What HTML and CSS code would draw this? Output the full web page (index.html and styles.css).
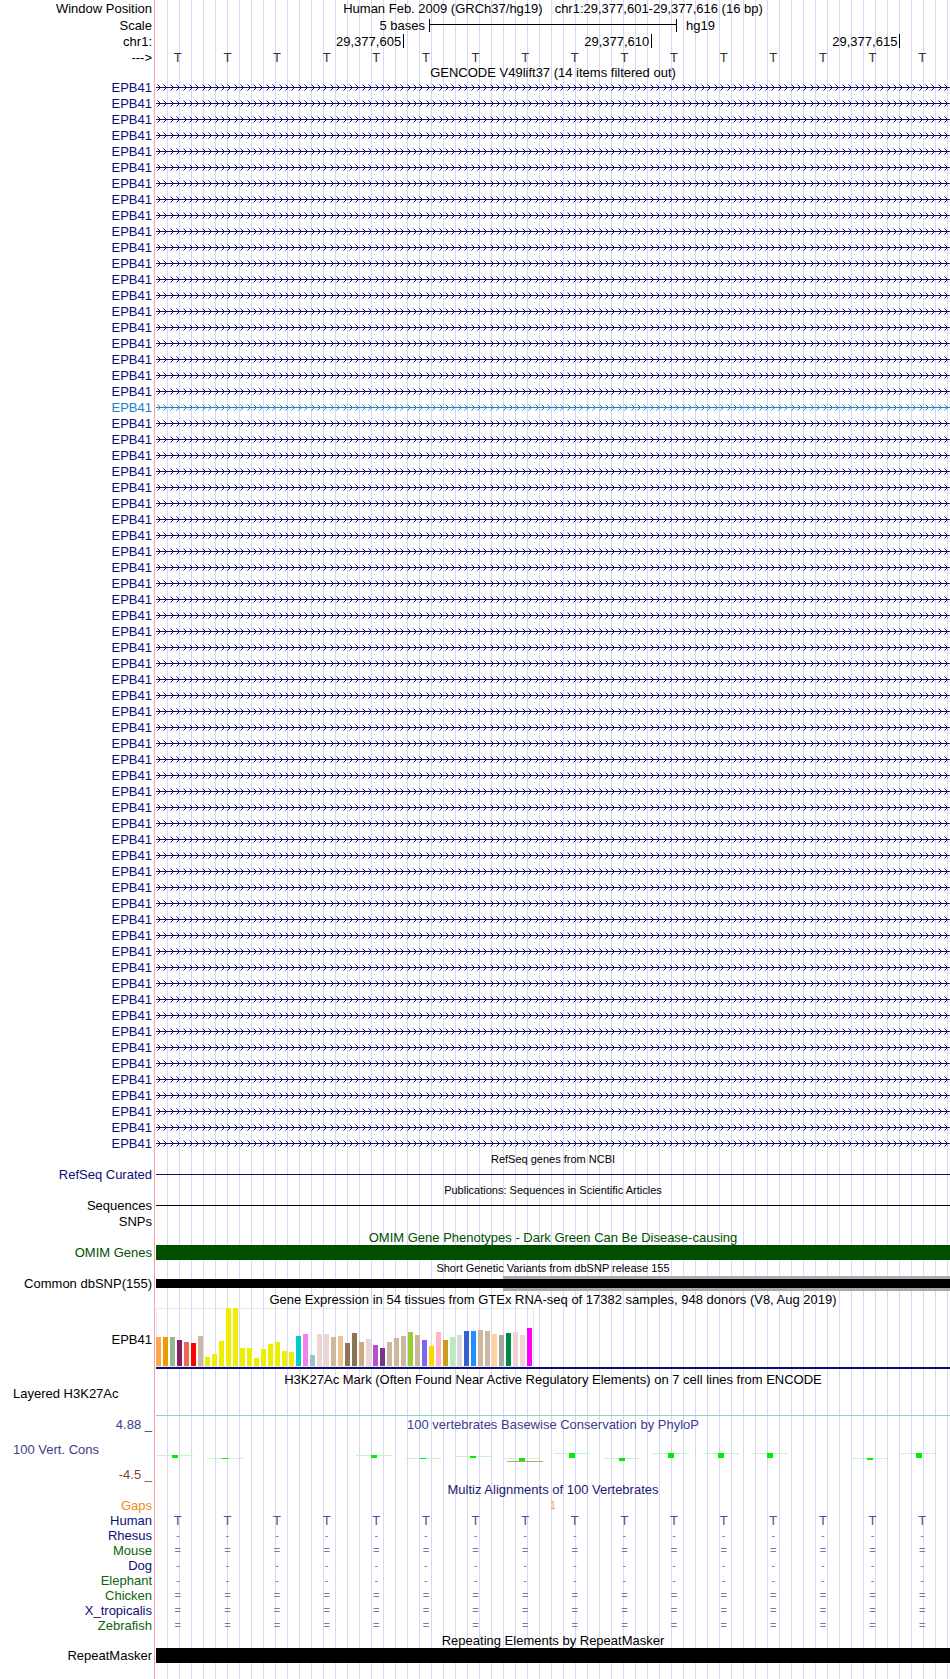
FILE: index.html
```html
<!DOCTYPE html>
<html lang="en">

<head>
    <meta charset="UTF-8">
    <meta name="viewport" content="width=device-width, initial-scale=1.0">
    <title>UCSC Genome Browser chr1:29,377,601-29,377,616</title>
    <link rel="stylesheet" href="styles.css">
</head>

<body>
    <div class="browser">
        <!-- ruler -->
        <div class="row r17">
            <div class="lbl">Window Position</div>
            <div class="dat mid">Human Feb. 2009 (GRCh37/hg19)<span class="pos">chr1:29,377,601-29,377,616 (16 bp)</span></div>
        </div>
        <div class="row r17">
            <div class="lbl">Scale</div>
            <div class="dat scale">
                <span class="scale-txt">5 bases</span>
                <span class="scale-bar"></span>
                <span class="scale-db">hg19</span>
            </div>
        </div>
        <div class="row">
            <div class="lbl">chr1:</div>
            <div class="dat bases">
                <span class="tick t1">29,377,605</span>
                <span class="tick t2">29,377,610</span>
                <span class="tick t3">29,377,615</span>
            </div>
        </div>
        <div class="row r15">
            <div class="lbl">---&gt;</div>
            <div class="dat bases seq"><span>T</span><span>T</span><span>T</span><span>T</span><span>T</span><span>T</span><span>T</span><span>T</span><span>T</span><span>T</span><span>T</span><span>T</span><span>T</span><span>T</span><span>T</span><span>T</span></div>
        </div>

        <!-- GENCODE: 67 transcripts -->
        <div class="row r15">
            <div class="lbl"></div>
            <div class="dat mid">GENCODE V49lift37 (14 items filtered out)</div>
        </div>
        <div class="row gene"><div class="lbl">EPB41</div><svg class="dat" width="794" height="16">
            <defs>
                <pattern id="barb" width="32" height="16" patternUnits="userSpaceOnUse">
                    <rect y="7" width="32" height="1" fill="#0c0c78"/>
                    <path d="M1.5 4.5l3 3-3 3M7.5 4.5l3 3-3 3M14.5 4.5l3 3-3 3M20.5 4.5l3 3-3 3M27.5 4.5l3 3-3 3" fill="none" stroke="#0c0c78"/>
                </pattern>
                <pattern id="barb-hl" width="32" height="16" patternUnits="userSpaceOnUse">
                    <rect y="7" width="32" height="1" fill="#1f80c4"/>
                    <path d="M1.5 4.5l3 3-3 3M7.5 4.5l3 3-3 3M14.5 4.5l3 3-3 3M20.5 4.5l3 3-3 3M27.5 4.5l3 3-3 3" fill="none" stroke="#1f80c4"/>
                </pattern>
            </defs>
            <rect class="barbs" width="794" height="16"/></svg></div>
        <div class="row gene"><div class="lbl">EPB41</div><svg class="dat" width="794" height="16"><rect class="barbs" width="794" height="16"/></svg></div>
        <div class="row gene"><div class="lbl">EPB41</div><svg class="dat" width="794" height="16"><rect class="barbs" width="794" height="16"/></svg></div>
        <div class="row gene"><div class="lbl">EPB41</div><svg class="dat" width="794" height="16"><rect class="barbs" width="794" height="16"/></svg></div>
        <div class="row gene"><div class="lbl">EPB41</div><svg class="dat" width="794" height="16"><rect class="barbs" width="794" height="16"/></svg></div>

        <div class="row gene"><div class="lbl">EPB41</div><svg class="dat" width="794" height="16"><rect class="barbs" width="794" height="16"/></svg></div>
        <div class="row gene"><div class="lbl">EPB41</div><svg class="dat" width="794" height="16"><rect class="barbs" width="794" height="16"/></svg></div>
        <div class="row gene"><div class="lbl">EPB41</div><svg class="dat" width="794" height="16"><rect class="barbs" width="794" height="16"/></svg></div>
        <div class="row gene"><div class="lbl">EPB41</div><svg class="dat" width="794" height="16"><rect class="barbs" width="794" height="16"/></svg></div>
        <div class="row gene"><div class="lbl">EPB41</div><svg class="dat" width="794" height="16"><rect class="barbs" width="794" height="16"/></svg></div>

        <div class="row gene"><div class="lbl">EPB41</div><svg class="dat" width="794" height="16"><rect class="barbs" width="794" height="16"/></svg></div>
        <div class="row gene"><div class="lbl">EPB41</div><svg class="dat" width="794" height="16"><rect class="barbs" width="794" height="16"/></svg></div>
        <div class="row gene"><div class="lbl">EPB41</div><svg class="dat" width="794" height="16"><rect class="barbs" width="794" height="16"/></svg></div>
        <div class="row gene"><div class="lbl">EPB41</div><svg class="dat" width="794" height="16"><rect class="barbs" width="794" height="16"/></svg></div>
        <div class="row gene"><div class="lbl">EPB41</div><svg class="dat" width="794" height="16"><rect class="barbs" width="794" height="16"/></svg></div>

        <div class="row gene"><div class="lbl">EPB41</div><svg class="dat" width="794" height="16"><rect class="barbs" width="794" height="16"/></svg></div>
        <div class="row gene"><div class="lbl">EPB41</div><svg class="dat" width="794" height="16"><rect class="barbs" width="794" height="16"/></svg></div>
        <div class="row gene"><div class="lbl">EPB41</div><svg class="dat" width="794" height="16"><rect class="barbs" width="794" height="16"/></svg></div>
        <div class="row gene"><div class="lbl">EPB41</div><svg class="dat" width="794" height="16"><rect class="barbs" width="794" height="16"/></svg></div>
        <div class="row gene"><div class="lbl">EPB41</div><svg class="dat" width="794" height="16"><rect class="barbs" width="794" height="16"/></svg></div>

        <div class="row gene hl"><div class="lbl">EPB41</div><svg class="dat" width="794" height="16"><rect class="barbs" width="794" height="16"/></svg></div>

        <div class="row gene"><div class="lbl">EPB41</div><svg class="dat" width="794" height="16"><rect class="barbs" width="794" height="16"/></svg></div>
        <div class="row gene"><div class="lbl">EPB41</div><svg class="dat" width="794" height="16"><rect class="barbs" width="794" height="16"/></svg></div>
        <div class="row gene"><div class="lbl">EPB41</div><svg class="dat" width="794" height="16"><rect class="barbs" width="794" height="16"/></svg></div>
        <div class="row gene"><div class="lbl">EPB41</div><svg class="dat" width="794" height="16"><rect class="barbs" width="794" height="16"/></svg></div>
        <div class="row gene"><div class="lbl">EPB41</div><svg class="dat" width="794" height="16"><rect class="barbs" width="794" height="16"/></svg></div>

        <div class="row gene"><div class="lbl">EPB41</div><svg class="dat" width="794" height="16"><rect class="barbs" width="794" height="16"/></svg></div>
        <div class="row gene"><div class="lbl">EPB41</div><svg class="dat" width="794" height="16"><rect class="barbs" width="794" height="16"/></svg></div>
        <div class="row gene"><div class="lbl">EPB41</div><svg class="dat" width="794" height="16"><rect class="barbs" width="794" height="16"/></svg></div>
        <div class="row gene"><div class="lbl">EPB41</div><svg class="dat" width="794" height="16"><rect class="barbs" width="794" height="16"/></svg></div>
        <div class="row gene"><div class="lbl">EPB41</div><svg class="dat" width="794" height="16"><rect class="barbs" width="794" height="16"/></svg></div>

        <div class="row gene"><div class="lbl">EPB41</div><svg class="dat" width="794" height="16"><rect class="barbs" width="794" height="16"/></svg></div>
        <div class="row gene"><div class="lbl">EPB41</div><svg class="dat" width="794" height="16"><rect class="barbs" width="794" height="16"/></svg></div>
        <div class="row gene"><div class="lbl">EPB41</div><svg class="dat" width="794" height="16"><rect class="barbs" width="794" height="16"/></svg></div>
        <div class="row gene"><div class="lbl">EPB41</div><svg class="dat" width="794" height="16"><rect class="barbs" width="794" height="16"/></svg></div>
        <div class="row gene"><div class="lbl">EPB41</div><svg class="dat" width="794" height="16"><rect class="barbs" width="794" height="16"/></svg></div>

        <div class="row gene"><div class="lbl">EPB41</div><svg class="dat" width="794" height="16"><rect class="barbs" width="794" height="16"/></svg></div>
        <div class="row gene"><div class="lbl">EPB41</div><svg class="dat" width="794" height="16"><rect class="barbs" width="794" height="16"/></svg></div>
        <div class="row gene"><div class="lbl">EPB41</div><svg class="dat" width="794" height="16"><rect class="barbs" width="794" height="16"/></svg></div>
        <div class="row gene"><div class="lbl">EPB41</div><svg class="dat" width="794" height="16"><rect class="barbs" width="794" height="16"/></svg></div>
        <div class="row gene"><div class="lbl">EPB41</div><svg class="dat" width="794" height="16"><rect class="barbs" width="794" height="16"/></svg></div>

        <div class="row gene"><div class="lbl">EPB41</div><svg class="dat" width="794" height="16"><rect class="barbs" width="794" height="16"/></svg></div>
        <div class="row gene"><div class="lbl">EPB41</div><svg class="dat" width="794" height="16"><rect class="barbs" width="794" height="16"/></svg></div>
        <div class="row gene"><div class="lbl">EPB41</div><svg class="dat" width="794" height="16"><rect class="barbs" width="794" height="16"/></svg></div>
        <div class="row gene"><div class="lbl">EPB41</div><svg class="dat" width="794" height="16"><rect class="barbs" width="794" height="16"/></svg></div>
        <div class="row gene"><div class="lbl">EPB41</div><svg class="dat" width="794" height="16"><rect class="barbs" width="794" height="16"/></svg></div>

        <div class="row gene"><div class="lbl">EPB41</div><svg class="dat" width="794" height="16"><rect class="barbs" width="794" height="16"/></svg></div>
        <div class="row gene"><div class="lbl">EPB41</div><svg class="dat" width="794" height="16"><rect class="barbs" width="794" height="16"/></svg></div>
        <div class="row gene"><div class="lbl">EPB41</div><svg class="dat" width="794" height="16"><rect class="barbs" width="794" height="16"/></svg></div>
        <div class="row gene"><div class="lbl">EPB41</div><svg class="dat" width="794" height="16"><rect class="barbs" width="794" height="16"/></svg></div>
        <div class="row gene"><div class="lbl">EPB41</div><svg class="dat" width="794" height="16"><rect class="barbs" width="794" height="16"/></svg></div>

        <div class="row gene"><div class="lbl">EPB41</div><svg class="dat" width="794" height="16"><rect class="barbs" width="794" height="16"/></svg></div>
        <div class="row gene"><div class="lbl">EPB41</div><svg class="dat" width="794" height="16"><rect class="barbs" width="794" height="16"/></svg></div>
        <div class="row gene"><div class="lbl">EPB41</div><svg class="dat" width="794" height="16"><rect class="barbs" width="794" height="16"/></svg></div>
        <div class="row gene"><div class="lbl">EPB41</div><svg class="dat" width="794" height="16"><rect class="barbs" width="794" height="16"/></svg></div>
        <div class="row gene"><div class="lbl">EPB41</div><svg class="dat" width="794" height="16"><rect class="barbs" width="794" height="16"/></svg></div>

        <div class="row gene"><div class="lbl">EPB41</div><svg class="dat" width="794" height="16"><rect class="barbs" width="794" height="16"/></svg></div>
        <div class="row gene"><div class="lbl">EPB41</div><svg class="dat" width="794" height="16"><rect class="barbs" width="794" height="16"/></svg></div>
        <div class="row gene"><div class="lbl">EPB41</div><svg class="dat" width="794" height="16"><rect class="barbs" width="794" height="16"/></svg></div>
        <div class="row gene"><div class="lbl">EPB41</div><svg class="dat" width="794" height="16"><rect class="barbs" width="794" height="16"/></svg></div>
        <div class="row gene"><div class="lbl">EPB41</div><svg class="dat" width="794" height="16"><rect class="barbs" width="794" height="16"/></svg></div>

        <div class="row gene"><div class="lbl">EPB41</div><svg class="dat" width="794" height="16"><rect class="barbs" width="794" height="16"/></svg></div>
        <div class="row gene"><div class="lbl">EPB41</div><svg class="dat" width="794" height="16"><rect class="barbs" width="794" height="16"/></svg></div>
        <div class="row gene"><div class="lbl">EPB41</div><svg class="dat" width="794" height="16"><rect class="barbs" width="794" height="16"/></svg></div>
        <div class="row gene"><div class="lbl">EPB41</div><svg class="dat" width="794" height="16"><rect class="barbs" width="794" height="16"/></svg></div>
        <div class="row gene"><div class="lbl">EPB41</div><svg class="dat" width="794" height="16"><rect class="barbs" width="794" height="16"/></svg></div>

        <div class="row gene"><div class="lbl">EPB41</div><svg class="dat" width="794" height="16"><rect class="barbs" width="794" height="16"/></svg></div>

        <!-- RefSeq / publications / SNPs -->
        <div class="row r15">
            <div class="lbl"></div>
            <div class="dat mid small">RefSeq genes from NCBI</div>
        </div>
        <div class="row r15 navy">
            <div class="lbl">RefSeq Curated</div>
            <div class="dat line"></div>
        </div>
        <div class="row">
            <div class="lbl"></div>
            <div class="dat mid small">Publications: Sequences in Scientific Articles</div>
        </div>
        <div class="row r15">
            <div class="lbl">Sequences</div>
            <div class="dat line"></div>
        </div>
        <div class="row r17">
            <div class="lbl">SNPs</div>
            <div class="dat"></div>
        </div>
        <div class="row r15 green">
            <div class="lbl"></div>
            <div class="dat mid">OMIM Gene Phenotypes - Dark Green Can Be Disease-causing</div>
        </div>
        <div class="row r15 green">
            <div class="lbl">OMIM Genes</div>
            <div class="dat omim"></div>
        </div>
        <div class="row">
            <div class="lbl"></div>
            <div class="dat mid small">Short Genetic Variants from dbSNP release 155</div>
        </div>
        <div class="row r15">
            <div class="lbl">Common dbSNP(155)</div>
            <div class="dat snp"><div class="snp-bar"></div></div>
        </div>

        <!-- GTEx -->
        <div class="row r17">
            <div class="lbl"></div>
            <div class="dat mid">Gene Expression in 54 tissues from GTEx RNA-seq of 17382 samples, 948 donors (V8, Aug 2019)</div>
        </div>
        <div class="row gtex">
            <div class="lbl">EPB41</div>
            <div class="dat gtex-plot">
                <svg width="794" height="59">
                    <rect class="gtex-box" x="0.5" y="0.5" width="377" height="58"/>
                    <rect x="0" y="29" width="5" height="29" fill="#ffa54f"/>
                    <rect x="7" y="29" width="5" height="29" fill="#ee9a00"/>
                    <rect x="14" y="29" width="5" height="29" fill="#8fbc8f"/>
                    <rect x="21" y="32" width="5" height="26" fill="#8b1c62"/>
                    <rect x="28" y="34" width="5" height="24" fill="#ee6a50"/>
                    <rect x="35" y="35" width="5" height="23" fill="#ff0000"/>
                    <rect x="42" y="28" width="5" height="30" fill="#cdb79e"/>
                    <rect x="49" y="49" width="5" height="9" fill="#eeee00"/>
                    <rect x="56" y="46" width="5" height="12" fill="#eeee00"/>
                    <rect x="63" y="33" width="5" height="25" fill="#eeee00"/>
                    <rect x="70" y="0" width="5" height="58" fill="#eeee00"/>
                    <rect x="77" y="0" width="5" height="58" fill="#eeee00"/>
                    <rect x="84" y="40" width="5" height="18" fill="#eeee00"/>
                    <rect x="91" y="40" width="5" height="18" fill="#eeee00"/>
                    <rect x="98" y="50" width="5" height="8" fill="#eeee00"/>
                    <rect x="105" y="41" width="5" height="17" fill="#eeee00"/>
                    <rect x="112" y="36" width="5" height="22" fill="#eeee00"/>
                    <rect x="119" y="34" width="5" height="24" fill="#eeee00"/>
                    <rect x="126" y="43" width="5" height="15" fill="#eeee00"/>
                    <rect x="133" y="44" width="5" height="14" fill="#eeee00"/>
                    <rect x="140" y="28" width="5" height="30" fill="#00cdcd"/>
                    <rect x="147" y="26" width="5" height="32" fill="#ee82ee"/>
                    <rect x="154" y="47" width="5" height="11" fill="#9ac0cd"/>
                    <rect x="161" y="26" width="5" height="32" fill="#eed5d2"/>
                    <rect x="168" y="26" width="5" height="32" fill="#eed5d2"/>
                    <rect x="175" y="29" width="5" height="29" fill="#cdb79e"/>
                    <rect x="182" y="28" width="5" height="30" fill="#eec591"/>
                    <rect x="189" y="35" width="5" height="23" fill="#8b7355"/>
                    <rect x="196" y="25" width="5" height="33" fill="#8b7355"/>
                    <rect x="203" y="34" width="5" height="24" fill="#cdaa7d"/>
                    <rect x="210" y="31" width="5" height="27" fill="#eed5d2"/>
                    <rect x="217" y="37" width="5" height="21" fill="#b452cd"/>
                    <rect x="224" y="40" width="5" height="18" fill="#7a378b"/>
                    <rect x="231" y="34" width="5" height="24" fill="#cdb79e"/>
                    <rect x="238" y="30" width="5" height="28" fill="#cdb79e"/>
                    <rect x="245" y="28" width="5" height="30" fill="#cdb79e"/>
                    <rect x="252" y="24" width="5" height="34" fill="#9acd32"/>
                    <rect x="259" y="27" width="5" height="31" fill="#cdb79e"/>
                    <rect x="266" y="32" width="5" height="26" fill="#7b68ee"/>
                    <rect x="273" y="38" width="5" height="20" fill="#ffd700"/>
                    <rect x="280" y="24" width="5" height="34" fill="#ffb6c1"/>
                    <rect x="287" y="32" width="5" height="26" fill="#cd9b1d"/>
                    <rect x="294" y="29" width="5" height="29" fill="#b4eeb4"/>
                    <rect x="301" y="27" width="5" height="31" fill="#d9d9d9"/>
                    <rect x="308" y="23" width="5" height="35" fill="#3a5fcd"/>
                    <rect x="315" y="23" width="5" height="35" fill="#1e90ff"/>
                    <rect x="322" y="22" width="5" height="36" fill="#cdb79e"/>
                    <rect x="329" y="23" width="5" height="35" fill="#cdb79e"/>
                    <rect x="336" y="26" width="5" height="32" fill="#ffd39b"/>
                    <rect x="343" y="27" width="5" height="31" fill="#a6a6a6"/>
                    <rect x="350" y="25" width="5" height="33" fill="#008b45"/>
                    <rect x="357" y="24" width="5" height="34" fill="#eed5d2"/>
                    <rect x="364" y="27" width="5" height="31" fill="#eed5d2"/>
                    <rect x="371" y="20" width="5" height="38" fill="#ff00ff"/>
                </svg>
            </div>
        </div>

        <!-- H3K27Ac -->
        <div class="row r17 pad-title">
            <div class="lbl"></div>
            <div class="dat mid">H3K27Ac Mark (Often Found Near Active Regulatory Elements) on 7 cell lines from ENCODE</div>
        </div>
        <div class="row layer">
            <div class="lbl">Layered H3K27Ac</div>
            <div class="dat"></div>
        </div>

        <!-- PhyloP -->
        <div class="row r17 phylo">
            <div class="lbl">4.88 _</div>
            <div class="dat mid">100 vertebrates Basewise Conservation by PhyloP</div>
        </div>
        <div class="row phylo-data">
            <div class="lbl phylo-lbl">
                <span>100 Vert. Cons</span>
                <span class="axis-lo">-4.5 _</span>
            </div>
            <svg class="dat" width="794" height="49">
                <g class="pale">
                    <rect x="1" y="22" width="36" height="1"/>
                    <rect x="51" y="25" width="36" height="1"/>
                    <rect x="200" y="22" width="36" height="1"/>
                    <rect x="249" y="25" width="36" height="1"/>
                    <rect x="299" y="23" width="36" height="1"/>
                    <rect x="348" y="25" width="36" height="1"/>
                    <rect x="398" y="20" width="36" height="1"/>
                    <rect x="448" y="25" width="36" height="1"/>
                    <rect x="497" y="20" width="36" height="1"/>
                    <rect x="547" y="20" width="36" height="1"/>
                    <rect x="596" y="20" width="36" height="1"/>
                    <rect x="696" y="25" width="36" height="1"/>
                    <rect x="745" y="20" width="36" height="1"/>
                </g>
                <rect class="neg" x="351" y="28" width="36" height="1"/>
                <g class="hit">
                    <rect x="16" y="22" width="6" height="3"/>
                    <rect x="66" y="25" width="6" height="1"/>
                    <rect x="215" y="22" width="6" height="3"/>
                    <rect x="264" y="25" width="6" height="1"/>
                    <rect x="314" y="23" width="6" height="2"/>
                    <rect x="363" y="25" width="6" height="3"/>
                    <rect x="413" y="20" width="6" height="5"/>
                    <rect x="463" y="25" width="6" height="3"/>
                    <rect x="512" y="20" width="6" height="5"/>
                    <rect x="562" y="20" width="6" height="5"/>
                    <rect x="611" y="20" width="6" height="5"/>
                    <rect x="711" y="25" width="6" height="2"/>
                    <rect x="760" y="20" width="6" height="5"/>
                </g>
            </svg>
        </div>

        <!-- Multiz -->
        <div class="row multiz">
            <div class="lbl"></div>
            <div class="dat mid">Multiz Alignments of 100 Vertebrates</div>
        </div>
        <div class="row r15">
            <div class="lbl orange">Gaps</div>
            <div class="dat bases"><span class="gap-n">1</span></div>
        </div>
        <div class="row r15 maf">
            <div class="lbl navy">Human</div>
            <div class="dat bases"><span>T</span><span>T</span><span>T</span><span>T</span><span>T</span><span>T</span><span>T</span><span>T</span><span>T</span><span>T</span><span>T</span><span>T</span><span>T</span><span>T</span><span>T</span><span>T</span></div>
        </div>
        <div class="row r15 maf sym">
            <div class="lbl navy">Rhesus</div>
            <div class="dat bases"><span>-</span><span>-</span><span>-</span><span>-</span><span>-</span><span>-</span><span>-</span><span>-</span><span>-</span><span>-</span><span>-</span><span>-</span><span>-</span><span>-</span><span>-</span><span>-</span></div>
        </div>
        <div class="row r15 maf sym">
            <div class="lbl green2">Mouse</div>
            <div class="dat bases"><span>=</span><span>=</span><span>=</span><span>=</span><span>=</span><span>=</span><span>=</span><span>=</span><span>=</span><span>=</span><span>=</span><span>=</span><span>=</span><span>=</span><span>=</span><span>=</span></div>
        </div>
        <div class="row r15 maf sym">
            <div class="lbl navy">Dog</div>
            <div class="dat bases"><span>-</span><span>-</span><span>-</span><span>-</span><span>-</span><span>-</span><span>-</span><span>-</span><span>-</span><span>-</span><span>-</span><span>-</span><span>-</span><span>-</span><span>-</span><span>-</span></div>
        </div>
        <div class="row r15 maf sym">
            <div class="lbl green2">Elephant</div>
            <div class="dat bases"><span>-</span><span>-</span><span>-</span><span>-</span><span>-</span><span>-</span><span>-</span><span>-</span><span>-</span><span>-</span><span>-</span><span>-</span><span>-</span><span>-</span><span>-</span><span>-</span></div>
        </div>
        <div class="row r15 maf sym">
            <div class="lbl green2">Chicken</div>
            <div class="dat bases"><span>=</span><span>=</span><span>=</span><span>=</span><span>=</span><span>=</span><span>=</span><span>=</span><span>=</span><span>=</span><span>=</span><span>=</span><span>=</span><span>=</span><span>=</span><span>=</span></div>
        </div>
        <div class="row r15 maf sym">
            <div class="lbl navy">X_tropicalis</div>
            <div class="dat bases"><span>=</span><span>=</span><span>=</span><span>=</span><span>=</span><span>=</span><span>=</span><span>=</span><span>=</span><span>=</span><span>=</span><span>=</span><span>=</span><span>=</span><span>=</span><span>=</span></div>
        </div>
        <div class="row r15 maf sym">
            <div class="lbl green2">Zebrafish</div>
            <div class="dat bases"><span>=</span><span>=</span><span>=</span><span>=</span><span>=</span><span>=</span><span>=</span><span>=</span><span>=</span><span>=</span><span>=</span><span>=</span><span>=</span><span>=</span><span>=</span><span>=</span></div>
        </div>

        <!-- RepeatMasker -->
        <div class="row r15">
            <div class="lbl"></div>
            <div class="dat mid">Repeating Elements by RepeatMasker</div>
        </div>
        <div class="row r15">
            <div class="lbl">RepeatMasker</div>
            <div class="dat rmsk"></div>
        </div>
    </div>
</body>

</html>
```

FILE: styles.css
```css
* {
    box-sizing: border-box;
}

body {
    margin: 0;
    background: #fff;
    font-family: "Liberation Sans", Arial, sans-serif;
    font-size: 13px;
    color: #000;
}

/* red divider + blue guidelines every 12px */
.browser {
    width: 950px;
    min-height: 1679px;
    background:
        linear-gradient(#f9a3a3, #f9a3a3) 154px 0 / 1px 100% no-repeat,
        repeating-linear-gradient(to right, #d7d7f7 0 1px, transparent 1px 12px) 167px 0 / 783px 100% no-repeat;
}

.row {
    display: flex;
    height: 16px;
    line-height: 16px;
}

.r15 {
    height: 15px;
    line-height: 15px;
}

.r17 {
    height: 17px;
    line-height: 17px;
}

.lbl {
    flex: none;
    width: 156px;
    padding-right: 4px;
    text-align: right;
    white-space: nowrap;
}

.dat {
    flex: none;
    display: block;
    width: 794px;
    white-space: nowrap;
}

.mid {
    text-align: center;
}

.small {
    font-size: 11px;
}

.pos {
    margin-left: 12px;
}

.navy {
    color: #0c0c78;
}

.green {
    color: #005000;
}

.green2 {
    color: #0c640c;
}

.orange {
    color: #ef8c1c;
}

/* scale bar */
.scale {
    display: grid;
    grid-template-columns: 1fr 248px 1fr;
}

.scale-txt {
    text-align: right;
    padding-right: 4px;
}

.scale-bar {
    height: 13px;
    margin-top: 2px;
    border-left: 1px solid #000;
    border-right: 1px solid #000;
    background: linear-gradient(#000, #000) 0 5px / 100% 1px no-repeat;
}

.scale-db {
    padding-left: 9px;
}

/* 16 bases across the window */
.bases {
    display: grid;
    grid-template-columns: repeat(16, 1fr);
}

.tick {
    height: 14px;
    padding-right: 2px;
    text-align: right;
    border-right: 1px solid #000;
}

.t1 {
    grid-column: 1 / 6;
}

.t2 {
    grid-column: 6 / 11;
}

.t3 {
    grid-column: 11 / 16;
}

.seq span {
    text-align: center;
    padding-right: 6px;
    color: #333;
}

/* gene rows */
.gene .lbl {
    color: #0c0c78;
}

.gene.hl .lbl {
    color: #1f80c4;
}

.barbs {
    fill: url(#barb);
}

.hl .barbs {
    fill: url(#barb-hl);
}

.line {
    background: linear-gradient(currentColor, currentColor) 0 7px / 100% 1px no-repeat;
}

.omim {
    background: #005000;
}

.snp {
    padding-top: 3px;
    background: linear-gradient(#aaa, #aaa) 347px 0 / 447px 100% no-repeat;
}

.snp-bar {
    height: 9px;
    background: #000;
}

/* GTEx */
.gtex {
    height: 61px;
}

.gtex .lbl {
    padding-top: 24px;
}

.gtex-plot {
    border-bottom: 2px solid #0c0c78;
}

.gtex-plot svg {
    display: block;
}

.gtex-box {
    fill: none;
    stroke: #e8e8e8;
}

/* H3K27Ac */
.pad-title {
    padding-top: 4px;
    line-height: 13px;
}

.layer {
    height: 30px;
    line-height: 15px;
}

.layer .lbl {
    text-align: left;
    padding-left: 13px;
}

.layer .dat {
    border-bottom: 1px solid #8ad6c6;
}

/* PhyloP */
.phylo {
    color: #3c3c8c;
}

.phylo-data {
    height: 49px;
    line-height: 15px;
}

.phylo-lbl {
    display: flex;
    flex-direction: column;
    justify-content: space-between;
    padding: 9px 4px 0 13px;
    text-align: left;
    color: #3c3c8c;
}

.axis-lo {
    align-self: flex-end;
    color: #8c3c3c;
}

.pale {
    fill: #c6f6c6;
}

.hit {
    fill: #0e0;
}

.neg {
    fill: #bca276;
}

/* Multiz */
.multiz {
    color: #191970;
}

.gap-n {
    grid-column: 8 / 10;
    text-align: center;
    font-size: 10px;
    color: #f0a040;
}

.maf span {
    text-align: center;
    padding-right: 6px;
    color: #4e4e8e;
}

.maf.sym span {
    font-size: 11px;
    color: #7676ae;
}

.rmsk {
    background: #000;
}
```
